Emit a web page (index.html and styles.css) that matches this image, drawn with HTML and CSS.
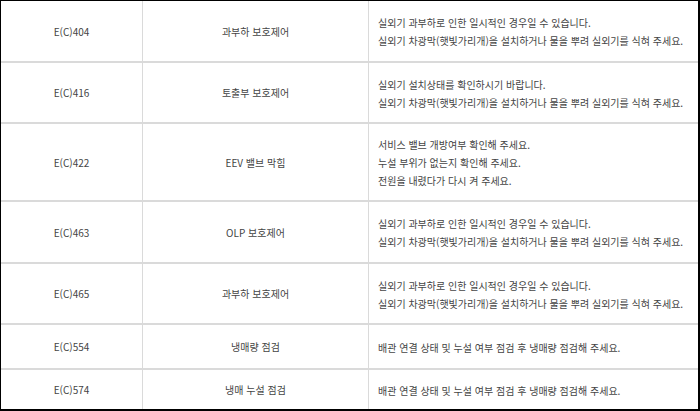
FILE: index.html
```html
<!DOCTYPE html>
<html lang="ko">
<head>
<meta charset="utf-8">
<link rel="stylesheet" href="styles.css">
</head>
<body>
<div class="frame">
  <div class="table">
    <div class="row r1">
      <div class="cell code">E(C)404</div>
      <div class="cell name">과부하 보호제어</div>
      <div class="cell desc"><p>실외기 과부하로 인한 일시적인 경우일 수 있습니다.</p><p>실외기 차광막(햇빛가리개)을 설치하거나 물을 뿌려 실외기를 식혀 주세요.</p></div>
    </div>
    <div class="row r2">
      <div class="cell code">E(C)416</div>
      <div class="cell name">토출부 보호제어</div>
      <div class="cell desc"><p>실외기 설치상태를 확인하시기 바랍니다.</p><p>실외기 차광막(햇빛가리개)을 설치하거나 물을 뿌려 실외기를 식혀 주세요.</p></div>
    </div>
    <div class="row r3">
      <div class="cell code">E(C)422</div>
      <div class="cell name">EEV 밸브 막힘</div>
      <div class="cell desc"><p>서비스 밸브 개방여부 확인해 주세요.</p><p>누설 부위가 없는지 확인해 주세요.</p><p>전원을 내렸다가 다시 켜 주세요.</p></div>
    </div>
    <div class="row r4">
      <div class="cell code">E(C)463</div>
      <div class="cell name">OLP 보호제어</div>
      <div class="cell desc"><p>실외기 과부하로 인한 일시적인 경우일 수 있습니다.</p><p>실외기 차광막(햇빛가리개)을 설치하거나 물을 뿌려 실외기를 식혀 주세요.</p></div>
    </div>
    <div class="row r5">
      <div class="cell code">E(C)465</div>
      <div class="cell name">과부하 보호제어</div>
      <div class="cell desc"><p>실외기 과부하로 인한 일시적인 경우일 수 있습니다.</p><p>실외기 차광막(햇빛가리개)을 설치하거나 물을 뿌려 실외기를 식혀 주세요.</p></div>
    </div>
    <div class="row r6">
      <div class="cell code">E(C)554</div>
      <div class="cell name">냉매량 점검</div>
      <div class="cell desc"><p>배관 연결 상태 및 누설 여부 점검 후 냉매량 점검해 주세요.</p></div>
    </div>
    <div class="row r7 last">
      <div class="cell code">E(C)574</div>
      <div class="cell name">냉매 누설 점검</div>
      <div class="cell desc"><p>배관 연결 상태 및 누설 여부 점검 후 냉매량 점검해 주세요.</p></div>
    </div>
  </div>
</div>
</body>
</html>
```

FILE: styles.css
```css
html, body {
  margin: 0;
  padding: 0;
  background: #fff;
}
.frame {
  width: 700px;
  height: 411px;
  box-sizing: border-box;
  border-style: solid;
  border-color: #000;
  border-width: 1px 2px 2px 1px;
  overflow: hidden;
  font-family: "Noto Sans CJK KR", "Noto Sans", sans-serif;
  font-size: 10px;
  color: #444;
}
.table {
  display: flex;
  flex-direction: column;
}
.row {
  display: grid;
  grid-template-columns: 142px 226px 1fr;
  border-bottom: 2px solid #dadada;
  box-sizing: border-box;
}
.row.last { border-bottom: none; }
.r1 { height: 62px; }
.r2 { height: 61px; }
.r3 { height: 78px; }
.r4 { height: 62px; }
.r5 { height: 61px; }
.r6 { height: 45px; }
.r7 { height: 39px; }
.cell {
  display: flex;
  align-items: center;
  border-right: 1px solid #dadada;
}
.code, .name {
  justify-content: center;
}
.desc {
  border-right: none;
  flex-direction: column;
  align-items: flex-start;
  justify-content: center;
  padding: 2px 0 0 9px;
}
.desc p {
  margin: 0;
  line-height: 18px;
}
```
